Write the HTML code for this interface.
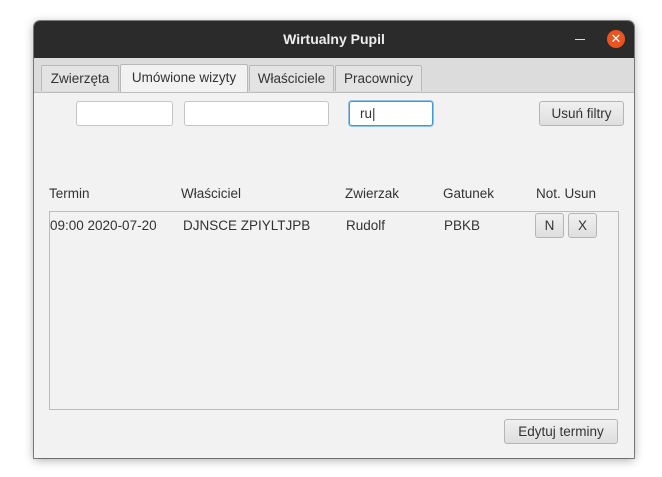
<html><head><style>
body{margin:0;width:662px;height:477px;background:#fff;font-family:"Liberation Sans","DejaVu Sans",sans-serif;font-size:13.5px;color:#333;position:relative;overflow:hidden}
.a{position:absolute}
.win{left:34px;top:21px;width:600px;height:437px;background:#f2f2f2;box-shadow:0 0 0 1px rgba(0,0,0,.45),0 2px 10px rgba(0,0,0,.35);border-radius:6px 6px 0 0;overflow:hidden}
.title{left:0;top:0;width:600px;height:37px;background:#2b2b2b;color:#eee;font-weight:bold;font-size:14px;text-align:center;line-height:37px}
.tabbar{left:0;top:37px;width:600px;height:34px;background:#dcdcdc;border-bottom:1px solid #bdbdbd}
.tab{top:7px;height:25px;border:1px solid #b8b8b8;border-bottom:none;background:#e3e3e3;line-height:25px;text-align:center;border-radius:2px 2px 0 0}
.tab.sel{background:#f2f2f2;height:27px}
.inp{background:#fff;border:1px solid #c5c5c5;border-radius:3px;height:23px}
.btn{border:1px solid #b5b5b5;border-radius:3px;background:linear-gradient(#f0f0f0,#dedede);text-align:center;line-height:23px}
</style></head><body>
<div class="a win">
<div class="a title">Wirtualny Pupil</div>
<div class="a" style="left:541px;top:18px;width:10px;height:1px;background:#ddd"></div>
<div class="a" style="left:573px;top:9px;width:18px;height:18px;border-radius:50%;background:#e95420;color:#fff;text-align:center;line-height:18px;font-size:13px">✕</div>
<div class="a tabbar"></div>
<div class="a tab" style="left:7px;width:76px;top:44px">Zwierzęta</div>
<div class="a tab sel" style="left:86px;width:126px;top:43px">Umówione wizyty</div>
<div class="a tab" style="left:215px;width:83px;top:44px">Właściciele</div>
<div class="a tab" style="left:301px;width:85px;top:44px">Pracownicy</div>
<div class="a inp" style="left:42px;top:80px;width:95px"></div>
<div class="a inp" style="left:150px;top:80px;width:143px"></div>
<div class="a inp" style="left:315px;top:80px;border:1px solid #3d9ad6;box-shadow:0 0 0 1px #8fc3e8;line-height:23px;padding-left:10px;box-sizing:border-box;width:84px;height:25px">ru|</div>
<div class="a btn" style="left:505px;top:80px;width:83px">Usuń filtry</div>
<div class="a" style="left:15px;top:165px">Termin</div>
<div class="a" style="left:147px;top:165px">Właściciel</div>
<div class="a" style="left:311px;top:165px">Zwierzak</div>
<div class="a" style="left:409px;top:165px">Gatunek</div>
<div class="a" style="left:502px;top:165px">Not. Usun</div>
<div class="a" style="left:15px;top:190px;width:568px;height:197px;border:1px solid #bcbcbc;background:#f2f2f2"></div>
<div class="a" style="left:16px;top:197px">09:00 2020-07-20</div>
<div class="a" style="left:149px;top:197px">DJNSCE ZPIYLTJPB</div>
<div class="a" style="left:312px;top:197px">Rudolf</div>
<div class="a" style="left:410px;top:197px">PBKB</div>
<div class="a btn" style="left:501px;top:192px;width:27px">N</div>
<div class="a btn" style="left:534px;top:192px;width:27px">X</div>
<div class="a btn" style="left:470px;top:398px;width:112px">Edytuj terminy</div>
</div>
</body></html>
